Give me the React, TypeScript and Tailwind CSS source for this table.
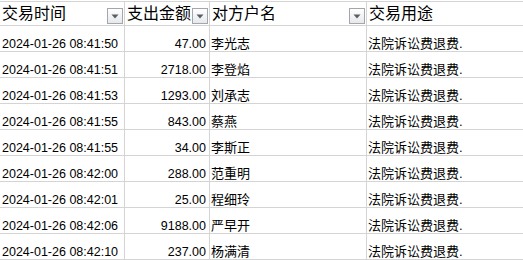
import React from 'react';

const rows = [
  { time: '2024-01-26 08:41:50', amount: '47.00', name: '李光志' },
  { time: '2024-01-26 08:41:51', amount: '2718.00', name: '李登焰' },
  { time: '2024-01-26 08:41:53', amount: '1293.00', name: '刘承志' },
  { time: '2024-01-26 08:41:55', amount: '843.00', name: '蔡燕' },
  { time: '2024-01-26 08:41:55', amount: '34.00', name: '李斯正' },
  { time: '2024-01-26 08:42:00', amount: '288.00', name: '范重明' },
  { time: '2024-01-26 08:42:01', amount: '25.00', name: '程细玲' },
  { time: '2024-01-26 08:42:06', amount: '9188.00', name: '严早开' },
  { time: '2024-01-26 08:42:10', amount: '237.00', name: '杨满清' },
];

const FilterButton: React.FC = () => (
  <div className="mb-px mr-px flex h-4 w-4 shrink-0 items-center justify-center border border-[#a3a7ad] bg-gradient-to-b from-white to-[#e6e8eb]">
    <svg width="8" height="5" viewBox="0 0 8 5">
      <path d="M0.5 0.5 L7.5 0.5 L4 4.5 Z" fill="#5a5e63" />
    </svg>
  </div>
);

const HeaderCell: React.FC<{ label: string; filter?: boolean; className: string }> = ({ label, filter, className }) => (
  <div className={`flex h-6 items-end justify-between border-b border-r border-[#d4d4d4] pl-[2px] ${className}`}>
    <span className="self-center text-[16px] leading-[20px]">{label}</span>
    {filter && <FilterButton />}
  </div>
);

export default function App() {
  return (
    <div
      className="h-[260px] w-[523px] overflow-hidden bg-white pt-px text-black"
      style={{ fontFamily: '"Liberation Sans", "Noto Sans CJK SC", sans-serif' }}
    >
      <div className="flex border-t border-[#d4d4d4]">
        <HeaderCell label="交易时间" filter className="w-[125px]" />
        <HeaderCell label="支出金额" filter className="w-[85px]" />
        <HeaderCell label="对方户名" filter className="w-[157px]" />
        <HeaderCell label="交易用途" className="flex-1 border-r-0" />
      </div>
      {rows.map((r, i) => (
        <div key={i} className="flex h-[26px] text-[12.5px] leading-[14px]">
          <div className="flex w-[125px] items-end border-b border-r border-[#d4d4d4] pl-[2px]">{r.time}</div>
          <div className="flex w-[85px] items-end justify-end border-b border-r border-[#d4d4d4] pr-[3px]">{r.amount}</div>
          <div className="flex w-[157px] items-end border-b border-r border-[#d4d4d4] pl-[1px] text-[13px]">{r.name}</div>
          <div className="flex flex-1 items-end border-b border-[#d4d4d4] pl-[1px] text-[13px]">法院诉讼费退费.</div>
        </div>
      ))}
    </div>
  );
}
